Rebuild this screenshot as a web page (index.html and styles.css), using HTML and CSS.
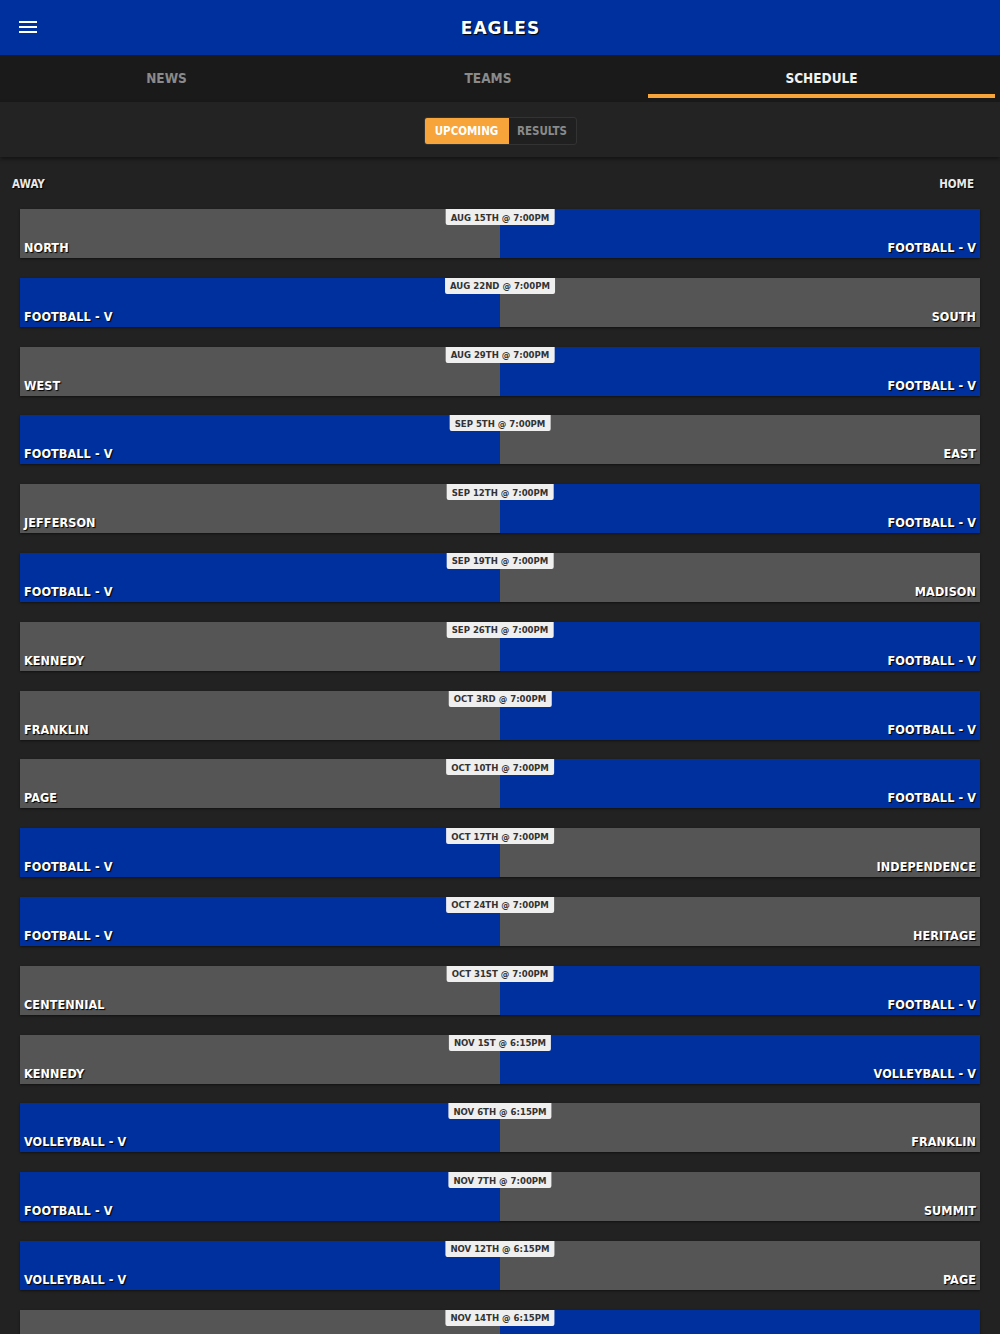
FILE: index.html
```html
<!DOCTYPE html>
<html>
<head>
<meta charset="utf-8">
<link rel="stylesheet" href="styles.css">
</head>
<body>
<header class="topbar">
  <button class="menu" aria-label="menu">
    <svg width="18" height="14" viewBox="0 0 18 14"><rect x="0" y="1" width="18" height="2" fill="#fff"/><rect x="0" y="6" width="18" height="2" fill="#fff"/><rect x="0" y="11" width="18" height="2" fill="#fff"/></svg>
  </button>
  <div class="brand">EAGLES</div>
</header>
<nav class="tabs">
  <div class="tab t1">NEWS</div>
  <div class="tab t2">TEAMS</div>
  <div class="tab t3 active">SCHEDULE</div>
</nav>
<div class="segbar">
  <div class="seg">
    <div class="seg-btn on">UPCOMING</div>
    <div class="seg-btn">RESULTS</div>
  </div>
</div>
<main class="schedule">
  <div class="labels"><span>AWAY</span><span>HOME</span></div>
  <div class="games" id="games"></div>
</main>
<script src="app.js"></script>
</body>
</html>
```
FILE: app.js
```js
var games = [
  ["NORTH","FOOTBALL - V","AUG 15TH @ 7:00PM",0],
  ["FOOTBALL - V","SOUTH","AUG 22ND @ 7:00PM",1],
  ["WEST","FOOTBALL - V","AUG 29TH @ 7:00PM",0],
  ["FOOTBALL - V","EAST","SEP 5TH @ 7:00PM",1],
  ["JEFFERSON","FOOTBALL - V","SEP 12TH @ 7:00PM",0],
  ["FOOTBALL - V","MADISON","SEP 19TH @ 7:00PM",1],
  ["KENNEDY","FOOTBALL - V","SEP 26TH @ 7:00PM",0],
  ["FRANKLIN","FOOTBALL - V","OCT 3RD @ 7:00PM",0],
  ["PAGE","FOOTBALL - V","OCT 10TH @ 7:00PM",0],
  ["FOOTBALL - V","INDEPENDENCE","OCT 17TH @ 7:00PM",1],
  ["FOOTBALL - V","HERITAGE","OCT 24TH @ 7:00PM",1],
  ["CENTENNIAL","FOOTBALL - V","OCT 31ST @ 7:00PM",0],
  ["KENNEDY","VOLLEYBALL - V","NOV 1ST @ 6:15PM",0],
  ["VOLLEYBALL - V","FRANKLIN","NOV 6TH @ 6:15PM",1],
  ["FOOTBALL - V","SUMMIT","NOV 7TH @ 7:00PM",1],
  ["VOLLEYBALL - V","PAGE","NOV 12TH @ 6:15PM",1],
  ["","","NOV 14TH @ 6:15PM",0]
];
var root = document.getElementById("games");
games.forEach(function (g) {
  var row = document.createElement("div");
  row.className = "game";
  var a = document.createElement("div");
  a.className = "side away " + (g[3] ? "blue" : "gray");
  a.innerHTML = "<span class='team'>" + g[0] + "</span>";
  var h = document.createElement("div");
  h.className = "side home " + (g[3] ? "gray" : "blue");
  h.innerHTML = "<span class='team'>" + g[1] + "</span>";
  var d = document.createElement("div");
  d.className = "date";
  d.textContent = g[2];
  row.appendChild(a);
  row.appendChild(h);
  row.appendChild(d);
  root.appendChild(row);
});
```
FILE: styles.css
```css
* { box-sizing: border-box; }
html, body { margin: 0; padding: 0; }
body {
  background: #222222;
  font-family: "DejaVu Sans Condensed", "DejaVu Sans", sans-serif;
  font-weight: bold;
  color: #fff;
  width: 1000px;
  height: 1334px;
  overflow: hidden;
}
.topbar {
  height: 55px;
  background: #00309e;
  display: flex;
  align-items: center;
  justify-content: center;
  position: relative;
}
.menu {
  position: absolute;
  left: 19px;
  top: 20px;
  background: none;
  border: 0;
  padding: 0;
  width: 18px;
  height: 14px;
  display: block;
}
.menu svg { display: block; }
.brand {
  font-family: "DejaVu Sans", sans-serif;
  font-weight: bold;
  font-size: 17px;
  letter-spacing: 1px;
  text-shadow: 1px 1px 1px #000;
  padding-left: 1px;
}
.tabs {
  height: 47px;
  background: #1a1a1a;
  display: flex;
}
.tab {
  position: relative;
  display: flex;
  align-items: center;
  justify-content: center;
  font-size: 13.5px;
  color: #8a8a8a;
  padding-bottom: 2px;
}
.t1 { width: 333px; }
.t2 { width: 310px; }
.t3 { width: 347px; margin-left: 5px; }
.tab.active { color: #f2f2f2; }
.tab.active::after {
  content: "";
  position: absolute;
  left: 0; right: 0;
  top: 39px;
  height: 4px;
  background: #f7a43a;
}
.segbar {
  height: 55px;
  background: #232323;
  display: flex;
  justify-content: center;
  padding-top: 15px;
  box-shadow: 0 2px 4px rgba(0,0,0,0.45);
  position: relative;
}
.seg {
  display: flex;
  height: 28px;
  border: 1px solid #333;
  border-radius: 3px;
  overflow: hidden;
  background: #202020;
}
.seg-btn {
  display: flex;
  align-items: center;
  justify-content: center;
  font-size: 11.5px;
  color: #8a8a8a;
  width: 67px;
}
.seg-btn.on {
  background: #f7a43a;
  color: #fff;
  width: 84px;
}
.schedule { padding: 0 20px; }
.labels {
  display: flex;
  justify-content: space-between;
  margin: 0 6px 0 -8px;
  padding-top: 20px;
  height: 52px;
  font-size: 11.5px;
  color: #e8e8e8;
  text-shadow: 1px 1px 1px #000;
}
.games { display: flex; flex-direction: column; gap: 19.8px; }
.game {
  position: relative;
  height: 49px;
  display: flex;
  box-shadow: 0 1px 2px rgba(0,0,0,0.5);
}
.side {
  width: 50%;
  display: flex;
  align-items: flex-end;
  padding: 0 4px 3px;
}
.side.home { justify-content: flex-end; }
.gray { background: #555555; }
.blue { background: #00309e; }
.team {
  font-size: 12.5px;
  letter-spacing: 0.1px;
  text-shadow: 1px 1px 1px #000;
  color: #fff;
}
.date {
  position: absolute;
  top: 0;
  left: 50%;
  transform: translateX(-50%);
  height: 16px;
  padding: 0 5px;
  background: #efefef;
  border-radius: 0 0 2px 2px;
  color: #333;
  font-size: 9.5px;
  display: flex;
  align-items: center;
  white-space: nowrap;
}
```
